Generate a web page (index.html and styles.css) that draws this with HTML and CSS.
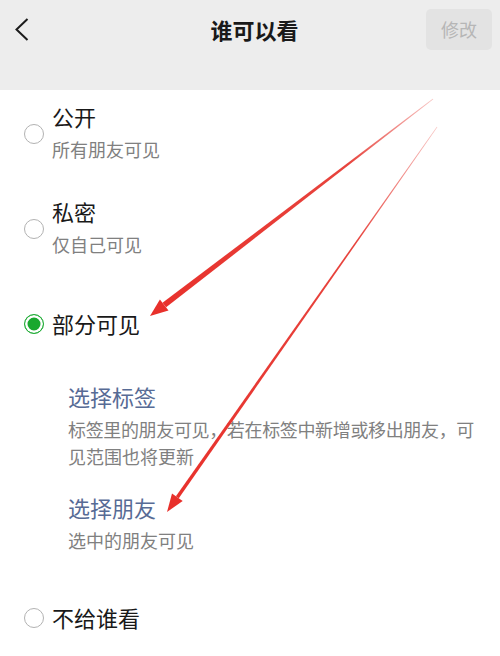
FILE: index.html
```html
<!DOCTYPE html>
<html lang="zh-CN">

<head>
    <meta charset="UTF-8">
    <meta name="viewport" content="width=device-width, initial-scale=1.0">
    <title>谁可以看</title>
    <link rel="stylesheet" href="styles.css">
</head>

<body>
    <div class="page">
        <div class="header">
            <a href="#" class="back-btn">
                <svg width="14" height="23" viewBox="0 0 14 23">
                    <polyline points="12.5,1 1.5,11.5 12.5,22" fill="none" stroke="#1c1c1c" stroke-width="2" />
                </svg>
            </a>
            <div class="title">谁可以看</div>
            <button class="save-btn">修改</button>
        </div>
        <div class="gap"></div>

        <div class="options">
            <div class="option">
                <span class="radio"></span>
                <div class="option-text">
                    <div class="option-title">公开</div>
                    <div class="option-sub">所有朋友可见</div>
                </div>
            </div>
            <div class="option">
                <span class="radio"></span>
                <div class="option-text">
                    <div class="option-title">私密</div>
                    <div class="option-sub">仅自己可见</div>
                </div>
            </div>
            <div class="option option-selected">
                <span class="radio checked"></span>
                <div class="option-text">
                    <div class="option-title">部分可见</div>
                </div>
            </div>

            <div class="sub-section">
                <div class="sub-item">
                    <div class="sub-title">选择标签</div>
                    <div class="sub-desc"><span class="full-line">标签里的朋友可见，若在标签中新增或移出朋友，可</span>见范围也将更新</div>
                </div>
                <div class="sub-item">
                    <div class="sub-title">选择朋友</div>
                    <div class="sub-desc">选中的朋友可见</div>
                </div>
            </div>

            <div class="option">
                <span class="radio"></span>
                <div class="option-text">
                    <div class="option-title">不给谁看</div>
                </div>
            </div>
        </div>

        <!-- red annotation arrows drawn over the screen -->
        <svg class="arrows" width="500" height="656" viewBox="0 0 500 656">
            <defs>
                <linearGradient id="fade1" x1="433" y1="99" x2="150" y2="316" gradientUnits="userSpaceOnUse">
                    <stop offset="0" stop-color="#e63a33" stop-opacity="0.3" />
                    <stop offset="0.3" stop-color="#e63a33" stop-opacity="0.95" />
                    <stop offset="1" stop-color="#e8302b" />
                </linearGradient>
                <linearGradient id="fade2" x1="437" y1="127" x2="167" y2="512" gradientUnits="userSpaceOnUse">
                    <stop offset="0" stop-color="#e63a33" stop-opacity="0.3" />
                    <stop offset="0.3" stop-color="#e63a33" stop-opacity="0.95" />
                    <stop offset="1" stop-color="#e8302b" />
                </linearGradient>
            </defs>
            <polygon points="433.3,99.3 432.7,98.7 162.5,302.8 166.1,307.3" fill="url(#fade1)" />
            <polygon points="150,316 168.5,310.6 159.9,299.6" fill="#e8302b" />
            <polygon points="437.3,127.2 436.8,126.8 175.9,496.2 178.8,498.3" fill="url(#fade2)" />
            <polygon points="167,512 182.7,501.0 172.0,493.5" fill="#e8302b" />
        </svg>
    </div>
</body>

</html>
```

FILE: styles.css
```css
body {
    margin: 0;
    font-family: "Noto Sans CJK SC", "Noto Sans", sans-serif;
    background: #ffffff;
    overflow: hidden;
}

.page {
    position: relative;
    width: 500px;
    height: 656px;
    overflow: hidden;
}

.header {
    display: grid;
    grid-template-columns: 1fr auto 1fr;
    align-items: center;
    height: 58px;
    padding: 0 8px 0 17px;
    background: #ededed;
}

.back-btn {
    display: flex;
    margin-left: -2px;
}

.title {
    font-size: 22px;
    font-weight: bold;
    color: #191919;
}

.save-btn {
    justify-self: end;
    width: 66px;
    height: 41px;
    border: none;
    border-radius: 5px;
    background: #e3e3e3;
    color: #b6b6b6;
    font-family: inherit;
    font-size: 18px;
    padding: 0;
}

.gap {
    height: 32px;
    background: #ededed;
}

.option {
    display: flex;
    align-items: center;
    min-height: 66px;
    padding: 13px 0 13px 24px;
}

.option:first-child {
    padding: 10px 0 16px 24px;
}

.option-selected {
    padding: 16px 0 10px 24px;
}

.radio {
    flex-shrink: 0;
    width: 20px;
    height: 20px;
    margin: 2px 8px 0 0;
    border: 1.5px solid #b2b2b2;
    border-radius: 50%;
    box-sizing: border-box;
}

.radio.checked {
    border-color: #22ad38;
    background: #1aa82f;
    box-shadow: inset 0 0 0 2.5px #ffffff;
}

.option-title {
    font-size: 22px;
    line-height: 32px;
    color: #191919;
}

.option-sub {
    font-size: 18px;
    line-height: 34px;
    color: #808080;
}

.sub-section {
    padding: 0 22px 17px 68px;
}

.sub-item {
    padding-top: 14px;
}

.sub-item + .sub-item {
    padding-top: 21px;
}

.sub-title {
    font-size: 22px;
    line-height: 32px;
    color: #576b95;
}

.sub-desc {
    margin-top: 4px;
    font-size: 18px;
    line-height: 27px;
    color: #808080;
}

.full-line {
    display: block;
    white-space: nowrap;
    letter-spacing: -0.35px;
}

.arrows {
    position: absolute;
    top: 0;
    left: 0;
    pointer-events: none;
}
```
